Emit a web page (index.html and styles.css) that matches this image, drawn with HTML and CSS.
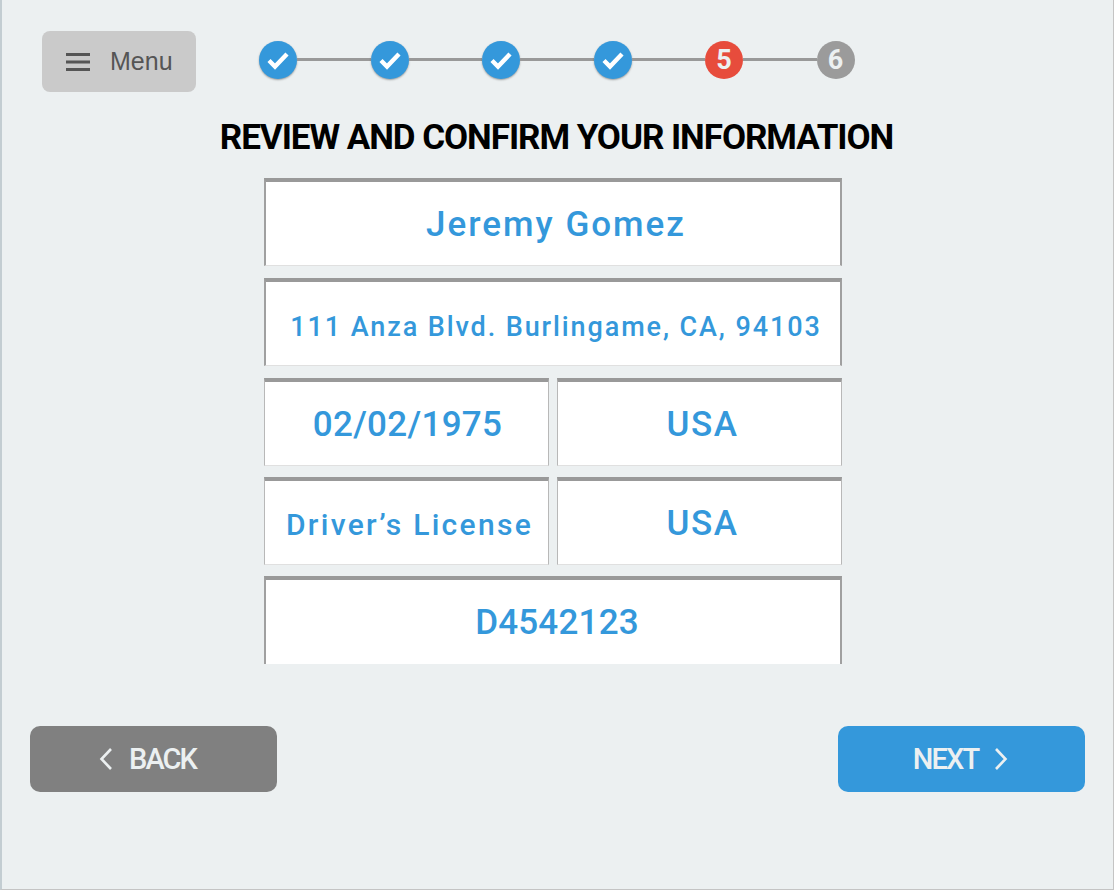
FILE: index.html
```html
<!DOCTYPE html>
<html lang="en">
<head>
  <meta charset="UTF-8" />
  <title>Review and confirm</title>
  <meta name="viewport" content="width=device-width, initial-scale=1.0" />
  <link rel="stylesheet" href="styles.css">
</head>
<body>
  <div class="screen">
    <div class="top-bar">
      <button class="menu-btn" type="button">
        <svg class="menu-icon" width="24" height="18" viewBox="0 0 24 18"><path d="M0 1.500h24M0 9h24M0 16.500h24" stroke="#555" stroke-width="3" fill="none"/></svg>
        <span>Menu</span>
      </button>
      <div class="steps">
        <div class="step done"><svg width="24" height="20" viewBox="0 0 24 20"><path d="M3 10.500l6 6L21 4" stroke="#fff" stroke-width="4.400" fill="none"/></svg></div>
        <div class="step-line"></div>
        <div class="step done"><svg width="24" height="20" viewBox="0 0 24 20"><path d="M3 10.500l6 6L21 4" stroke="#fff" stroke-width="4.400" fill="none"/></svg></div>
        <div class="step-line"></div>
        <div class="step done"><svg width="24" height="20" viewBox="0 0 24 20"><path d="M3 10.500l6 6L21 4" stroke="#fff" stroke-width="4.400" fill="none"/></svg></div>
        <div class="step-line"></div>
        <div class="step done"><svg width="24" height="20" viewBox="0 0 24 20"><path d="M3 10.500l6 6L21 4" stroke="#fff" stroke-width="4.400" fill="none"/></svg></div>
        <div class="step-line"></div>
        <div class="step current">5</div>
        <div class="step-line"></div>
        <div class="step todo">6</div>
      </div>
    </div>

    <h1 class="title">REVIEW AND CONFIRM YOUR INFORMATION</h1>

    <div class="fields">
      <div class="field"><span class="val name">Jeremy Gomez</span></div>
      <div class="field"><span class="val address">111 Anza Blvd. Burlingame, CA, 94103</span></div>
      <div class="field-row">
        <div class="field thin"><span class="val date">02/02/1975</span></div>
        <div class="field thin"><span class="val country">USA</span></div>
      </div>
      <div class="field-row tight">
        <div class="field thin"><span class="val doc">Driver’s License</span></div>
        <div class="field thin"><span class="val country">USA</span></div>
      </div>
      <div class="field last tight"><span class="val number">D4542123</span></div>
    </div>

    <div class="nav">
      <button class="nav-btn back" type="button">
        <svg width="14" height="24" viewBox="0 0 14 24"><path d="M12 2L2.500 12 12 22" stroke="#ecf0f1" stroke-width="2.600" fill="none"/></svg>
        <span>BACK</span>
      </button>
      <button class="nav-btn next" type="button">
        <span>NEXT</span>
        <svg width="14" height="24" viewBox="0 0 14 24"><path d="M2 2l9.500 10L2 22" stroke="#ecf0f1" stroke-width="2.600" fill="none"/></svg>
      </button>
    </div>
  </div>
</body>
</html>
```

FILE: styles.css
```css
* {
  margin: 0;
  padding: 0;
  box-sizing: border-box;
}

body {
  background: #ecf0f1;
  font-family: 'Roboto', sans-serif;
}

.screen {
  height: 890px;
  border-left: 2px solid #c3cdd2;
  border-right: 1px solid #c4c4c4;
  border-bottom: 1px solid #c4c4c4;
  padding: 31px 28px 0 28px;
}

.top-bar {
  display: flex;
  align-items: flex-start;
  padding-left: 12px;
}

.menu-btn {
  width: 154px;
  height: 61px;
  background: #cacaca;
  border: none;
  border-radius: 8px;
  display: flex;
  align-items: center;
  padding-left: 24px;
  gap: 20px;
  color: #555;
  font-family: 'Liberation Sans', sans-serif;
  font-size: 25px;
}

.steps {
  display: flex;
  align-items: center;
  margin-left: 63px;
  margin-top: 10px;
}

.step {
  width: 38px;
  height: 38px;
  border-radius: 50%;
  display: flex;
  align-items: center;
  justify-content: center;
  color: #ecf0f1;
  font-size: 27px;
  font-weight: 700;
  flex-shrink: 0;
}

.step.done {
  background: #3498db;
  box-shadow: 0 1px 2px rgba(0, 0, 0, 0.35);
}

.step.current {
  background: #e74c3c;
}

.step.todo {
  background: #9b9b9b;
}

.step-line {
  width: 73.500px;
  height: 3px;
  background: #999;
  margin-top: -2px;
}

.title {
  margin-top: 26px;
  padding-right: 2px;
  text-align: center;
  font-size: 35px;
  line-height: 40px;
  font-weight: 700;
  letter-spacing: -1.050px;
  color: #000;
  white-space: nowrap;
}

.fields {
  width: 578px;
  margin: 20px 0 0 234px;
  font-size: 35px;
  line-height: 46px;
  font-weight: 500;
  color: #3498db;
}

.field {
  height: 88px;
  background: #fff;
  border-top: 4px solid #999;
  border-left: 2px solid #a0a0a0;
  border-right: 2px solid #a0a0a0;
  border-bottom: 1px solid #e0e0e0;
  margin-bottom: 12px;
  padding: 20px 0 0 6px;
  text-align: center;
  white-space: nowrap;
}

.field.thin {
  border-left-color: #b8b8b8;
  border-right-color: #b8b8b8;
  border-left-width: 1.500px;
  border-right-width: 1.500px;
}

.field.last {
  border-bottom: none;
  margin-bottom: 0;
}

.field-row {
  display: grid;
  grid-template-columns: 285px 285px;
  gap: 8px;
}

.tight {
  margin-top: -1px;
}

.val {
  letter-spacing: 1.500px;
}

.name {
  font-size: 35px;
  letter-spacing: 2px;
}

.address {
  font-size: 27px;
  letter-spacing: 1.900px;
}

.date {
  margin-left: -4px;
  letter-spacing: 0.300px;
}

.number {
  margin-left: 2px;
  letter-spacing: 0.200px;
}

.country {
  vertical-align: 2px;
}

.doc {
  font-size: 30px;
  letter-spacing: 2.300px;
}

.nav {
  display: flex;
  justify-content: space-between;
  margin-top: 62px;
}

.nav-btn {
  width: 247px;
  height: 66px;
  border: none;
  border-radius: 10px;
  display: flex;
  align-items: center;
  justify-content: center;
  gap: 16px;
  color: #ecf0f1;
  font-family: 'Roboto', sans-serif;
  font-size: 29px;
  font-weight: 500;
  letter-spacing: -1.900px;
}

.nav-btn.back {
  background: #808080;
  padding-right: 12px;
}

.nav-btn.next {
  background: #3498db;
  padding-right: 2px;
}
```
